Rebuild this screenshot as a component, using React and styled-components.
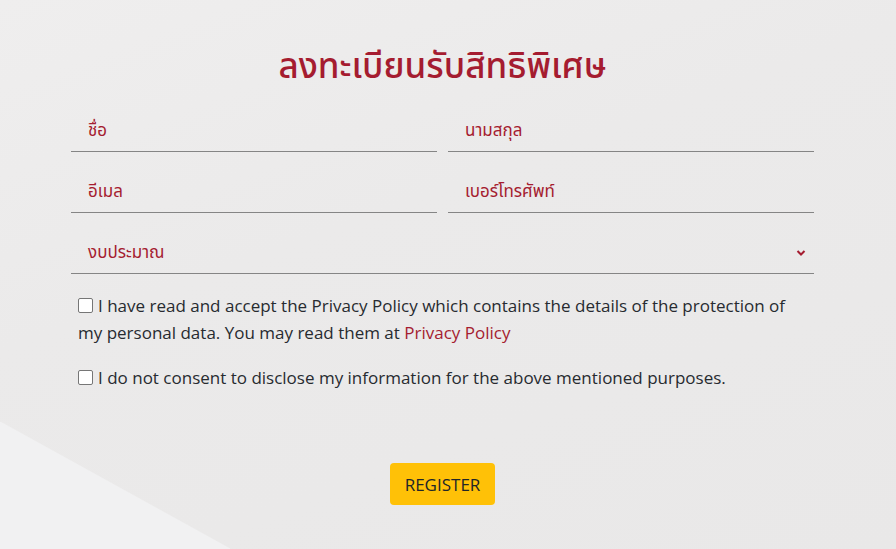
import React from "react";
import styled, { createGlobalStyle } from "styled-components";

const Global = createGlobalStyle`
  html, body { margin: 0; padding: 0; }
  body {
    width: 896px;
    height: 549px;
    overflow: hidden;
    background-color: #ebeaea;
    background-image:
      linear-gradient(to top right, #f1f1f2 50%, transparent 50.5%),
      linear-gradient(160deg, #efeeee 0%, #ebeaea 40%, #e9e8e8 100%);
    background-size: 230px 127px, 100% 100%;
    background-position: left bottom, 0 0;
    background-repeat: no-repeat;
    font-family: "Open Sans", "Noto Sans Thai", "Noto Sans", sans-serif;
  }
`;

const Page = styled.div`
  width: 896px;
  height: 549px;
  box-sizing: border-box;
  padding: 44px 0 0 71px;
`;

const Form = styled.form`
  width: 743px;
  display: flex;
  flex-direction: column;
`;

const Title = styled.h1`
  margin: 0;
  text-align: center;
  color: #a51c30;
  font-family: "Noto Sans Thai", "Noto Sans", sans-serif;
  font-weight: 500;
  font-size: 35px;
  line-height: 47px;
`;

const Grid = styled.div`
  display: grid;
  grid-template-columns: 1fr 1fr;
  column-gap: 11px;
`;

const Field = styled.div`
  grid-column: ${(p) => (p.$full ? "1 / -1" : "auto")};
  height: 61px;
  box-sizing: border-box;
  border-bottom: 1px solid #858585;
  display: flex;
  align-items: flex-end;
  justify-content: space-between;
  padding: 0 8px 5px 17px;
  color: #a51c30;
  font-family: "Noto Sans Thai", "Noto Sans", sans-serif;
  font-size: 17px;
  line-height: 30px;
`;

const Chevron = styled.svg`
  width: 10px;
  height: 8px;
  margin-bottom: 11px;
`;

const Checks = styled.div`
  margin-top: 18px;
  padding: 0 16px 0 7px;
  display: flex;
  flex-direction: column;
  gap: 18px;
`;

const CheckRow = styled.label`
  display: block;
  color: #272b30;
  font-size: 17px;
  line-height: 27px;
`;

const Box = styled.span`
  display: inline-block;
  width: 13px;
  height: 13px;
  border: 1px solid #767676;
  border-radius: 2px;
  background: #fff;
  vertical-align: -1px;
  margin-right: 5px;
`;

const Link = styled.a`
  color: #a51c30;
  text-decoration: none;
`;

const ButtonRow = styled.div`
  display: flex;
  justify-content: center;
  margin-top: 72px;
`;

const Button = styled.button`
  width: 105px;
  height: 42px;
  border: none;
  border-radius: 4px;
  background: #ffc107;
  color: #212529;
  font-family: "Open Sans", sans-serif;
  font-size: 17px;
  padding: 0;
`;

export default function App() {
  return (
    <>
      <Global />
      <Page>
        <Form>
          <Title>ลงทะเบียนรับสิทธิพิเศษ</Title>
          <Grid>
            <Field>ชื่อ</Field>
            <Field>นามสกุล</Field>
            <Field>อีเมล</Field>
            <Field>เบอร์โทรศัพท์</Field>
            <Field $full>
              <span>งบประมาณ</span>
              <Chevron viewBox="0 0 10 8">
                <path d="M1.5 2 L5 5.5 L8.5 2" fill="none" stroke="#a51c30" strokeWidth="2" />
              </Chevron>
            </Field>
          </Grid>
          <Checks>
            <CheckRow>
              <Box />I have read and accept the Privacy Policy which contains the details of the protection of my personal data. You may read them at <Link>Privacy Policy</Link>
            </CheckRow>
            <CheckRow>
              <Box />I do not consent to disclose my information for the above mentioned purposes.
            </CheckRow>
          </Checks>
          <ButtonRow>
            <Button type="button">REGISTER</Button>
          </ButtonRow>
        </Form>
      </Page>
    </>
  );
}
